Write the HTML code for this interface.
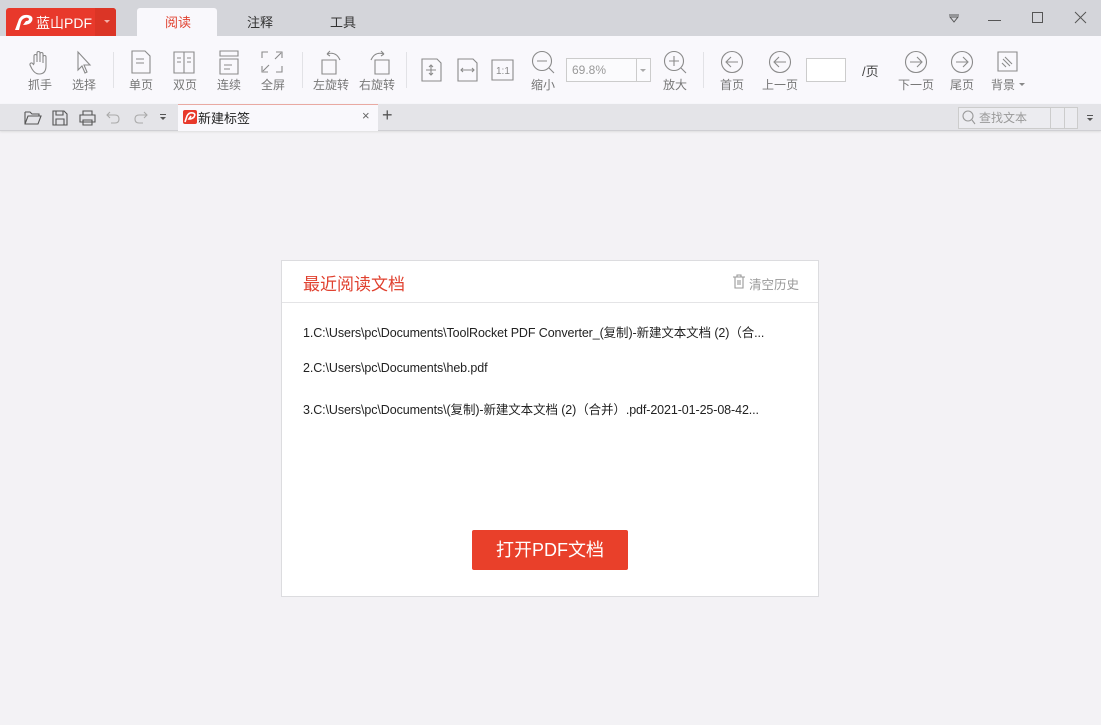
<!DOCTYPE html>
<html><head><meta charset="utf-8"><style>
*{margin:0;padding:0;box-sizing:border-box}
body{width:1101px;height:725px;overflow:hidden;background:#f3f2f5;font-family:"Liberation Sans","Noto Sans CJK SC",sans-serif;position:relative}
.a{position:absolute}
.lbl{position:absolute;font-size:12px;color:#777;top:76px;white-space:nowrap;transform:translateX(-50%)}
svg.i{position:absolute;stroke:#8a8a8a;fill:none;stroke-width:1.1}
.t{font-size:12.5px;color:#222;position:absolute;left:303px;white-space:nowrap;letter-spacing:-0.1px}
</style></head><body>
<div class="a" style="left:0;top:0;width:1101px;height:36px;background:#d4d5da"></div>
<div class="a" style="left:6px;top:8px;width:110px;height:28px;background:#e8392b;border-radius:3px 3px 0 0"></div>
<div class="a" style="left:95px;top:8px;width:21px;height:28px;background:#db3526;border-radius:0 3px 0 0"></div>
<div class="a" style="left:104px;top:20px;width:0;height:0;border-left:3px solid transparent;border-right:3px solid transparent;border-top:3px solid #f3b0a8"></div>
<svg class="a" style="left:13px;top:13px" width="22" height="18" viewBox="0 0 22 18"><path d="M2 17 L6 6 Q9 1 15 2 Q21 3 19 8 Q17 12 10 12 L13 8 Q16 8 16 6 Q15 4 12 5 Q9 6 8 9 L6 17Z" fill="#fff"/></svg>
<div class="a" style="left:36px;top:13px;font-size:14px;color:#fff">蓝山PDF</div>
<div class="a" style="left:137px;top:8px;width:80px;height:28px;background:#f9f8fc;border-radius:3px 3px 0 0"></div>
<div class="a" style="left:165px;top:12px;font-size:13px;color:#e0412f">阅读</div>
<div class="a" style="left:247px;top:12px;font-size:13px;color:#333">注释</div>
<div class="a" style="left:330px;top:12px;font-size:13px;color:#333">工具</div>
<svg class="a" style="left:946px;top:12px" width="16" height="12"><path d="M3 3H13M4 5L8 10L12 5Z" stroke="#555" fill="none"/></svg>
<div class="a" style="left:988px;top:20px;width:13px;height:1px;background:#555"></div>
<div class="a" style="left:1032px;top:12px;width:11px;height:11px;border:1px solid #555"></div>
<svg class="a" style="left:1074px;top:11px" width="13" height="13"><path d="M1 1L12 12M12 1L1 12" stroke="#555"/></svg>
<div class="a" style="left:0;top:36px;width:1101px;height:68px;background:#f9f8fc"></div>
<svg class="i" style="left:28px;top:50px" width="24" height="26" viewBox="0 0 24 26"><path d="M6 14V6a1.5 1.5 0 013 0V12M9 12V3a1.5 1.5 0 013 0V12M12 12V4a1.5 1.5 0 013 0V13M15 13V7a1.5 1.5 0 013 0V16Q18 24 11 24Q7 24 4 19L2 15a1.5 1.5 0 013-1L6 15"/></svg>
<svg class="i" style="left:74px;top:50px" width="20" height="26" viewBox="0 0 20 26"><path d="M4 2V20L8 16L11 23L13 22L10 15L16 15Z"/></svg>
<div class="lbl" style="left:40px">抓手</div><div class="lbl" style="left:84px">选择</div>
<div class="a" style="left:113px;top:52px;width:1px;height:36px;background:#e2e2e6"></div>
<svg class="i" style="left:130px;top:50px" width="22" height="24"><path d="M2 1H15L20 6V23H2Z M6 9H14M6 13H14"/></svg>
<svg class="i" style="left:172px;top:50px" width="24" height="24"><path d="M2 2H22V23H2ZM12 2V23M5 8H9M5 12H9M15 8H19M15 12H19"/></svg>
<svg class="i" style="left:217px;top:50px" width="24" height="26"><path d="M3 1H21V6H3ZM3 9H21V24H3ZM7 15H15M7 19H13"/></svg>
<svg class="i" style="left:260px;top:50px" width="24" height="24"><path d="M2 8V2H8M16 2H22V8M22 16V22H16M8 22H2V16M3 21L9 15M21 3L15 9"/></svg>
<div class="lbl" style="left:141px">单页</div><div class="lbl" style="left:185px">双页</div><div class="lbl" style="left:229px">连续</div><div class="lbl" style="left:273px">全屏</div>
<div class="a" style="left:302px;top:52px;width:1px;height:36px;background:#e2e2e6"></div>
<svg class="i" style="left:318px;top:48px" width="28" height="28"><path d="M4 12H18V26H4ZM9 6Q18 3 22 12M9 6L12 3M9 6L12 8"/></svg>
<svg class="i" style="left:365px;top:48px" width="28" height="28"><path d="M10 12H24V26H10ZM19 6Q10 3 6 12M19 6L16 3M19 6L16 8"/></svg>
<div class="lbl" style="left:331px">左旋转</div><div class="lbl" style="left:377px">右旋转</div>
<div class="a" style="left:406px;top:52px;width:1px;height:36px;background:#e2e2e6"></div>
<svg class="i" style="left:421px;top:58px" width="22" height="24"><path d="M1 1H16L20 5V23H1ZM10 7V17M5 12H15M8 9L10 7L12 9M8 15L10 17L12 15"/></svg>
<svg class="i" style="left:457px;top:58px" width="22" height="24"><path d="M1 1H16L20 5V23H1ZM4 12H17M6 10L4 12L6 14M15 10L17 12L15 14"/></svg>
<svg class="i" style="left:491px;top:59px" width="24" height="22"><path d="M1 1H22V21H1Z"/><text x="5" y="15" font-size="10" fill="#888" stroke="none" font-family="Liberation Sans">1:1</text></svg>
<svg class="i" style="left:531px;top:50px" width="26" height="26"><circle cx="11" cy="11" r="9.5"/><path d="M6 11H16M18 18L23 23"/></svg>
<div class="lbl" style="left:543px">缩小</div>
<div class="a" style="left:566px;top:58px;width:85px;height:24px;border:1px solid #ccc;background:#fbfbfd"></div>
<div class="a" style="left:636px;top:58px;width:1px;height:24px;background:#ccc"></div>
<div class="a" style="left:640px;top:69px;border-left:3px solid transparent;border-right:3px solid transparent;border-top:3px solid #aaa"></div>
<div class="a" style="left:572px;top:63px;font-size:12px;color:#999">69.8%</div>
<svg class="i" style="left:662px;top:50px" width="26" height="26"><circle cx="12" cy="11" r="9.5"/><path d="M7 11H17M12 6V16M19 18L24 23"/></svg>
<div class="lbl" style="left:675px">放大</div>
<div class="a" style="left:703px;top:52px;width:1px;height:36px;background:#e2e2e6"></div>
<svg class="i" style="left:720px;top:50px" width="24" height="24"><circle cx="12" cy="12" r="10.5"/><path d="M18 12H7M11 7L6 12L11 17"/></svg>
<svg class="i" style="left:768px;top:50px" width="24" height="24"><circle cx="12" cy="12" r="10.5"/><path d="M18 12H7M11 7L6 12L11 17"/></svg>
<div class="lbl" style="left:732px">首页</div><div class="lbl" style="left:780px">上一页</div>
<div class="a" style="left:806px;top:58px;width:40px;height:24px;border:1px solid #ccc;background:#fff"></div>
<div class="a" style="left:862px;top:61px;font-size:13px;color:#444">/页</div>
<svg class="i" style="left:904px;top:50px" width="24" height="24"><circle cx="12" cy="12" r="10.5"/><path d="M6 12H17M13 7L18 12L13 17"/></svg>
<svg class="i" style="left:950px;top:50px" width="24" height="24"><circle cx="12" cy="12" r="10.5"/><path d="M6 12H17M13 7L18 12L13 17"/></svg>
<svg class="i" style="left:997px;top:51px" width="22" height="22"><path d="M1 1H20V20H1ZM6 8L13 15M8 6L15 13M5 12L9 16"/></svg>
<div class="lbl" style="left:916px">下一页</div><div class="lbl" style="left:962px">尾页</div><div class="lbl" style="left:1003px">背景</div>
<div class="a" style="left:1019px;top:83px;border-left:3px solid transparent;border-right:3px solid transparent;border-top:3px solid #888"></div>
<div class="a" style="left:0;top:104px;width:1101px;height:27px;background:#e4e4e8;border-bottom:1px solid #cfcfd3;box-shadow:0 1px 2px #ddd"></div>
<svg class="i" style="left:24px;top:110px;stroke:#555" width="18" height="16"><path d="M1 2H6L8 4H15V6M1 2V14H14L17 6H4L1 14"/></svg>
<svg class="i" style="left:52px;top:110px;stroke:#555" width="16" height="16"><path d="M1 1H12L15 4V15H1ZM4 1V5H11V1M4 15V9H12V15"/></svg>
<svg class="i" style="left:79px;top:110px;stroke:#555" width="17" height="16"><path d="M4 5V1H13V5M1 5H16V12H1ZM4 10H13V15H4Z"/></svg>
<svg class="i" style="left:106px;top:111px;stroke:#aaa" width="15" height="14"><path d="M4 1L1 4L4 7M1 4H9Q13 4 13 8Q13 12 9 12H5"/></svg>
<svg class="i" style="left:133px;top:111px;stroke:#aaa" width="15" height="14"><path d="M11 1L14 4L11 7M14 4H6Q2 4 2 8Q2 12 6 12H10"/></svg>
<div class="a" style="left:160px;top:114px;width:6px;height:1px;background:#555"></div>
<div class="a" style="left:160px;top:117px;border-left:3px solid transparent;border-right:3px solid transparent;border-top:3px solid #555"></div>
<div class="a" style="left:178px;top:104px;width:200px;height:27px;background:#f9f8fc;border-top:1px solid #e9a9a2"></div>
<div class="a" style="left:183px;top:110px;width:14px;height:14px;background:#e8392b;border-radius:2px"></div>
<svg class="a" style="left:184px;top:111px" width="12" height="12"><path d="M1 11L3 5Q5 1 9 2Q12 3 10 6Q8 8 5 8L7 5" fill="none" stroke="#fff" stroke-width="1.6"/></svg>
<div class="a" style="left:198px;top:108px;font-size:13px;color:#222">新建标签</div>
<div class="a" style="left:362px;top:108px;font-size:13px;color:#666">×</div>
<div class="a" style="left:382px;top:105px;font-size:18px;color:#555">+</div>
<div class="a" style="left:958px;top:107px;width:120px;height:22px;border:1px solid #ccc;background:#ececf0"></div>
<div class="a" style="left:1050px;top:107px;width:1px;height:22px;background:#ccc"></div>
<div class="a" style="left:1064px;top:107px;width:1px;height:22px;background:#ccc"></div>
<svg class="i" style="left:962px;top:110px;stroke:#999" width="14" height="15"><circle cx="6" cy="6" r="5"/><path d="M10 10L13 14"/></svg>
<div class="a" style="left:979px;top:109px;font-size:12px;color:#999">查找文本</div>
<div class="a" style="left:1087px;top:115px;width:6px;height:1px;background:#555"></div>
<div class="a" style="left:1087px;top:118px;border-left:3px solid transparent;border-right:3px solid transparent;border-top:3px solid #555"></div>
<div class="a" style="left:281px;top:260px;width:538px;height:337px;background:#fff;border:1px solid #dcdcdf"></div>
<div class="a" style="left:282px;top:302px;width:536px;height:1px;background:#e4e4e6"></div>
<div class="a" style="left:303px;top:270px;font-size:17px;color:#e0412f">最近阅读文档</div>
<svg class="i" style="left:732px;top:274px;stroke:#999" width="14" height="15"><path d="M1 3H13M5 3V1H9V3M3 3V14H11V3M6 6V11M8 6V11"/></svg>
<div class="a" style="left:749px;top:274px;font-size:12.5px;color:#999">清空历史</div>
<div class="t" style="top:322px">1.C:\Users\pc\Documents\ToolRocket PDF Converter_(复制)-新建文本文档 (2)（合...</div>
<div class="t" style="top:361px">2.C:\Users\pc\Documents\heb.pdf</div>
<div class="t" style="top:399px">3.C:\Users\pc\Documents\(复制)-新建文本文档 (2)（合并）.pdf-2021-01-25-08-42...</div>
<div class="a" style="left:472px;top:530px;width:156px;height:40px;background:#e9402a;border-radius:2px;color:#fff;font-size:18px;text-align:center;line-height:40px">打开PDF文档</div>
</body></html>
